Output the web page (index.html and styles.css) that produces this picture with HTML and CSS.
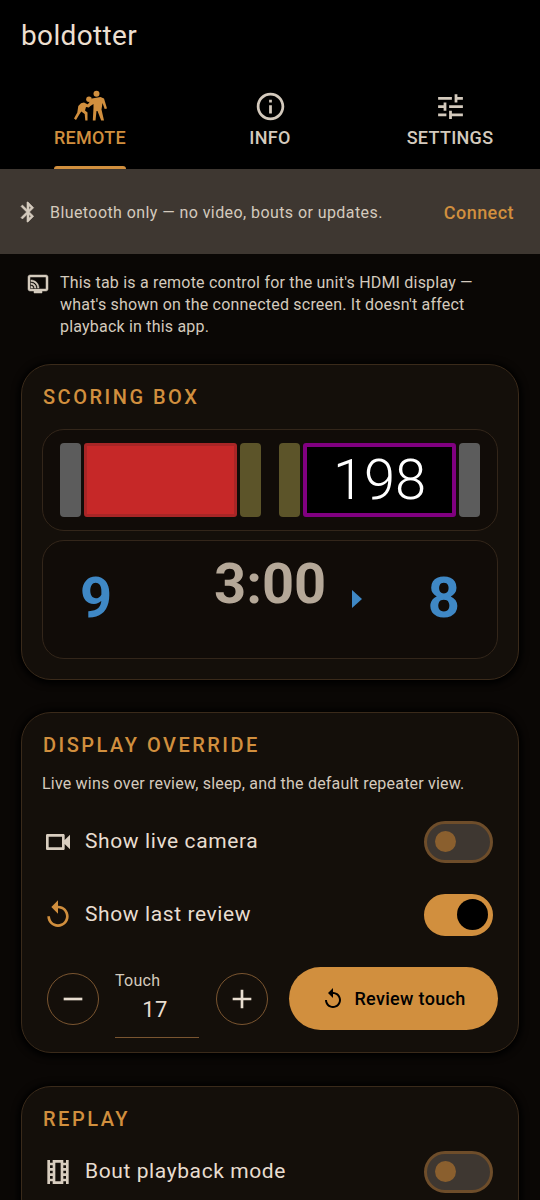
FILE: index.html
```html
<!DOCTYPE html>
<html lang="en">
<head>
    <meta charset="UTF-8">
    <meta name="viewport" content="width=device-width, initial-scale=1.0">
    <title>boldotter</title>
    <link rel="stylesheet" href="styles.css">
</head>
<body>
    <header class="top-bar">
        <h1 class="app-title">boldotter</h1>
        <nav class="tabs">
            <a class="tab active">
                <svg class="tab-icon" viewBox="73.500 89.500 33 33"><circle cx="96" cy="93.300" r="3"/><circle cx="88.500" cy="98.700" r="2.800"/><path d="M91.500 98L100 96.500 103.500 98 106.500 108 104.200 108.500 102 102.500 101 109 103.500 120 100.700 120 97 110.500 96 110.500 95 120 92.300 120 93 107 93 103.500 88 106.800 86.500 105z"/><path d="M83.500 102L89.500 105 88.500 107 85.500 106.500 84.500 110 87 112 87 120 84.800 120 84.200 113.500 80.800 111 78.800 114 75.500 119.500 73.500 118 76.800 112 77.800 105.500 80.500 102.800z"/></svg>
                <span>REMOTE</span>
            </a>
            <a class="tab">
                <svg class="tab-icon" viewBox="0 0 24 24"><path d="M11 7h2v2h-2zm0 4h2v6h-2zm1-9C6.48 2 2 6.48 2 12s4.48 10 10 10 10-4.48 10-10S17.52 2 12 2zm0 18c-4.41 0-8-3.59-8-8s3.59-8 8-8 8 3.59 8 8-3.59 8-8 8z"/></svg>
                <span>INFO</span>
            </a>
            <a class="tab">
                <svg class="tab-icon" viewBox="0 0 24 24"><path d="M3 17v2h6v-2H3zM3 5v2h10V5H3zm10 16v-2h8v-2h-8v-2h-2v6h2zM7 9v2H3v2h4v2h2V9H7zm14 4v-2H11v2h10zm-6-4h2V7h4V5h-4V3h-2v6z"/></svg>
                <span>SETTINGS</span>
            </a>
        </nav>
    </header>

    <div class="banner">
        <svg class="banner-icon" viewBox="0 0 24 24"><path d="M17.71 7.71L12 2h-1v7.59L6.41 5 5 6.41 10.59 12 5 17.59 6.41 19 11 14.41V22h1l5.71-5.71-4.3-4.29 4.3-4.29zM13 5.830l1.88 1.88L13 9.590V5.830zm1.88 10.460L13 18.170v-3.760l1.88 1.880z"/></svg>
        <span class="banner-text">Bluetooth only — no video, bouts or updates.</span>
        <span class="banner-action">Connect</span>
    </div>

    <main class="content">
        <div class="hint">
            <svg class="hint-icon" viewBox="0 0 24 24"><path d="M20 3H4c-1.100 0-2 .9-2 2v12c0 1.100.9 2 2 2h4v2h8v-2h4c1.100 0 2-.89 2-2V5c0-1.110-.9-2-2-2zm0 14H4V5h16v12zM5 14v2h2c0-1.110-.89-2-2-2zm0-3v1.430c1.970 0 3.570 1.600 3.570 3.570H10c0-2.760-2.240-5-5-5zm0-3v1.410c3.640 0 6.590 2.950 6.590 6.590H13c0-4.420-3.590-8-8-8z"/></svg>
            <p>This tab is a remote control for the unit's HDMI display — what's shown on the connected screen. It doesn't affect playback in this app.</p>
        </div>

        <section class="card card-score">
            <h2 class="card-title">SCORING BOX</h2>
            <div class="panel lights-panel">
                <div class="lights">
                    <div class="light light-gray"></div>
                    <div class="light-main light-red"></div>
                    <div class="light light-olive"></div>
                </div>
                <div class="lights">
                    <div class="light light-olive"></div>
                    <div class="light-main light-number">198</div>
                    <div class="light light-gray"></div>
                </div>
            </div>
            <div class="panel clock-panel">
                <div class="score">9</div>
                <div class="clock">3:00</div>
                <div class="priority"></div>
                <div class="score">8</div>
            </div>
        </section>

        <section class="card card-stepper">
            <h2 class="card-title">DISPLAY OVERRIDE</h2>
            <p class="card-desc">Live wins over review, sleep, and the default repeater view.</p>
            <div class="row">
                <svg class="row-icon" viewBox="0 0 24 24"><path d="M15 8v8H5V8h10m1-2H4c-.55 0-1 .45-1 1v10c0 .55.45 1 1 1h12c.55 0 1-.45 1-1v-3.500l4 4v-11l-4 4V7c0-.55-.45-1-1-1z"/></svg>
                <span class="row-label">Show live camera</span>
                <div class="switch"><div class="switch-thumb"></div></div>
            </div>
            <div class="row">
                <svg class="row-icon amber" viewBox="0 0 24 24"><path d="M12 5V1L7 6l5 5V7c3.310 0 6 2.690 6 6s-2.690 6-6 6-6-2.690-6-6H4c0 4.420 3.580 8 8 8s8-3.580 8-8-3.580-8-8-8z"/></svg>
                <span class="row-label">Show last review</span>
                <div class="switch on"><div class="switch-thumb"></div></div>
            </div>
            <div class="stepper-row">
                <button class="round-btn"><svg viewBox="0 0 24 24"><path d="M19 13H5v-2h14v2z"/></svg></button>
                <div class="touch-field">
                    <label>Touch</label>
                    <div class="touch-value">17</div>
                </div>
                <button class="round-btn"><svg viewBox="0 0 24 24"><path d="M19 13h-6v6h-2v-6H5v-2h6V5h2v6h6v2z"/></svg></button>
                <button class="review-btn">
                    <svg viewBox="0 0 24 24"><path d="M12 5V1L7 6l5 5V7c3.310 0 6 2.690 6 6s-2.690 6-6 6-6-2.690-6-6H4c0 4.420 3.580 8 8 8s8-3.580 8-8-3.580-8-8-8z"/></svg>
                    Review touch
                </button>
            </div>
        </section>

        <section class="card">
            <h2 class="card-title">REPLAY</h2>
            <div class="row replay-row">
                <svg class="row-icon" viewBox="0 0 24 24"><path d="M18 3v2h-2V3H8v2H6V3H4v18h2v-2h2v2h8v-2h2v2h2V3h-2zM8 17H6v-2h2v2zm0-4H6v-2h2v2zm0-4H6V7h2v2zm6 10h-4V5h4v14zm4-2h-2v-2h2v2zm0-4h-2v-2h2v2zm0-4h-2V7h2v2z"/></svg>
                <span class="row-label">Bout playback mode</span>
                <div class="switch"><div class="switch-thumb"></div></div>
            </div>
        </section>
    </main>
</body>
</html>
```

FILE: styles.css
```css
* {
    margin: 0;
    padding: 0;
    box-sizing: border-box;
}

html, body {
    height: 1200px;
    overflow: hidden;
}

body {
    font-family: Roboto, sans-serif;
    background: #0a0705;
    color: #e8ddd0;
}

svg {
    fill: currentColor;
    display: block;
    flex-shrink: 0;
}

.top-bar {
    background: #000;
    height: 169px;
}

.app-title {
    font-size: 28px;
    font-weight: 400;
    line-height: 36px;
    letter-spacing: 0.35px;
    padding: 18px 0 0 21px;
    color: #ecdfd0;
}

.tabs {
    display: flex;
    margin-top: 23px;
}

.tab {
    flex: 1;
    height: 92px;
    display: flex;
    flex-direction: column;
    align-items: center;
    font-size: 18px;
    font-weight: 500;
    line-height: 24px;
    letter-spacing: 0.3px;
    color: #d4cabd;
    position: relative;
}

.tab-icon {
    width: 33px;
    height: 33px;
    margin: 13px 0 3px;
}

.tab.active {
    color: #d18f3e;
}

.tab.active::after {
    content: "";
    position: absolute;
    bottom: 0;
    left: 54px;
    width: 72px;
    height: 3px;
    background: #d18f3e;
    border-radius: 3px 3px 0 0;
}

.banner {
    height: 85px;
    background: #3e3731;
    display: flex;
    align-items: center;
    padding: 1px 26px 0 16px;
}

.banner-icon {
    width: 24px;
    height: 24px;
    color: #d4cabd;
    stroke: currentColor;
    stroke-width: 0.6;
}

.banner-text {
    margin-left: 10px;
    font-size: 16px;
    letter-spacing: 0.42px;
    color: #d4cabd;
    flex: 1;
}

.banner-action {
    font-size: 18px;
    font-weight: 500;
    letter-spacing: 0.45px;
    color: #d18f3e;
}

.content {
    padding: 18px 21px 0;
}

.hint {
    display: flex;
    padding-left: 5px;
    color: #d4cabd;
    margin-bottom: 26px;
}

.hint-icon {
    width: 24px;
    height: 24px;
    margin-right: 10px;
    stroke: currentColor;
    stroke-width: 0.5;
}

.hint p {
    font-size: 16px;
    line-height: 22px;
    letter-spacing: 0.2px;
}

.card {
    background: #140f0a;
    border: 1px solid #3a2a1a;
    border-radius: 30px;
    box-shadow: 0 1px 6px 3px #000;
    padding: 20px 20px 20px;
    margin-bottom: 33px;
}

.card-score {
    margin-bottom: 32px;
}

.card-stepper {
    padding-bottom: 14px;
}

.card-title {
    font-size: 20px;
    font-weight: 500;
    line-height: 24px;
    letter-spacing: 2.5px;
    color: #d18f3e;
    padding-left: 1px;
}

.panel {
    border: 1px solid #33261a;
    border-radius: 22px;
    background: #110c08;
}

.lights-panel {
    margin-top: 20px;
    height: 102px;
    padding: 13px 17px;
    display: flex;
    justify-content: space-between;
}

.lights {
    display: flex;
    gap: 3px;
}

.light {
    width: 21px;
    border-radius: 4px;
}

.light-gray {
    background: #5c5c5c;
}

.light-olive {
    background: #5c5429;
}

.light-main {
    width: 153px;
    border-radius: 3px;
}

.light-red {
    background: #c62828;
    border: 3px solid #a82626;
}

.light-number {
    background: #000;
    border: 4px solid #800080;
    color: #fff;
    font-size: 56px;
    font-weight: 300;
    line-height: 66px;
    text-align: center;
}

.clock-panel {
    margin-top: 9px;
    height: 119px;
    display: grid;
    grid-template-columns: 134px 138px 10px 1fr;
    padding: 0 37px;
}

.score {
    font-size: 56px;
    font-weight: 700;
    color: #3f88c5;
    line-height: 66px;
    margin-top: 24px;
}

.score:last-child {
    text-align: right;
}

.clock {
    font-size: 56px;
    font-weight: 700;
    color: #b5a898;
    line-height: 66px;
    margin-top: 10px;
}

.priority {
    width: 0;
    height: 0;
    border-left: 10px solid #3f88c5;
    border-top: 9px solid transparent;
    border-bottom: 9px solid transparent;
    margin-top: 49px;
}

.card-desc {
    font-size: 16px;
    line-height: 22px;
    letter-spacing: 0.2px;
    color: #d4cabd;
    margin-top: 16px;
}

.row {
    height: 73px;
    display: flex;
    align-items: center;
    margin-top: 10px;
}

.row + .row {
    margin-top: 0;
}

.row-icon {
    width: 32px;
    height: 32px;
    margin-right: 11px;
    color: #d8cdbf;
}

.row-icon.amber {
    color: #d18f3e;
}

.row-label {
    flex: 1;
    font-size: 21px;
    letter-spacing: 0.6px;
    color: #e8ddd0;
    padding-bottom: 2px;
}

.switch {
    width: 69px;
    height: 42px;
    border-radius: 21px;
    border: 3px solid #6e4d2a;
    background: #3e3731;
    margin-right: 5px;
    display: flex;
    align-items: center;
    padding-left: 8px;
}

.switch-thumb {
    width: 21px;
    height: 21px;
    border-radius: 50%;
    background: #8a5f2e;
}

.switch.on {
    background: #d18f3e;
    border-color: #d18f3e;
    justify-content: flex-end;
    padding: 0 2px 0 0;
}

.switch.on .switch-thumb {
    width: 31px;
    height: 31px;
    background: #000;
}

.stepper-row {
    display: flex;
    align-items: flex-start;
    margin-top: 16px;
}

.round-btn {
    width: 52px;
    height: 52px;
    border-radius: 50%;
    border: 1px solid #7a5530;
    background: transparent;
    color: #e8ddd0;
    display: flex;
    align-items: center;
    justify-content: center;
    margin: 6px 0 0 5px;
}

.round-btn svg {
    width: 32px;
    height: 32px;
}

.touch-field {
    width: 84px;
    height: 67px;
    margin: 4px 12px 0 16px;
    border-bottom: 1px solid #7a5530;
}

.touch-field label {
    display: block;
    font-size: 16px;
    line-height: 20px;
    letter-spacing: 0.3px;
    color: #d4cabd;
}

.touch-value {
    font-size: 22px;
    line-height: 30px;
    margin-top: 4px;
    text-align: center;
    padding-right: 4px;
    letter-spacing: 0.5px;
}

.review-btn {
    margin-left: 21px;
    width: 209px;
    height: 63px;
    border: none;
    border-radius: 32px;
    background: #d18f3e;
    color: #000;
    font-family: Roboto, sans-serif;
    font-size: 18px;
    font-weight: 500;
    letter-spacing: 0.33px;
    display: flex;
    align-items: center;
    justify-content: center;
    gap: 9px;
}

.review-btn svg {
    width: 24px;
    height: 24px;
}

.replay-row {
    margin-top: 4px;
}
```
